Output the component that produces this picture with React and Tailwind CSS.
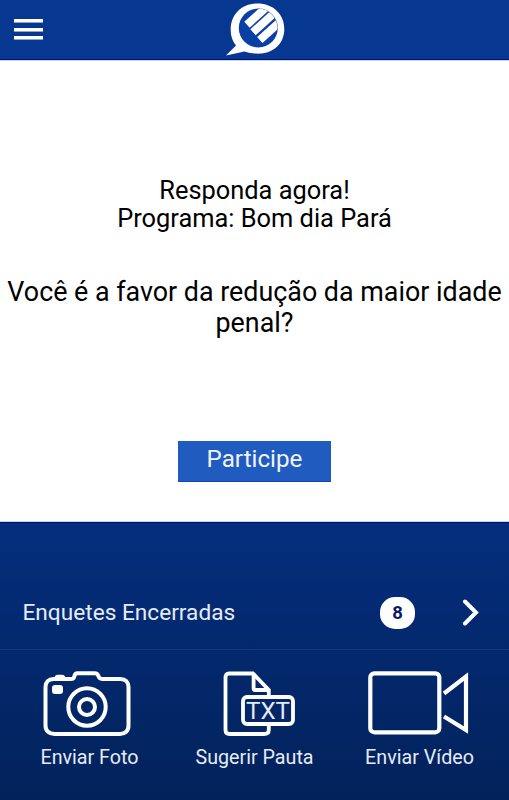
function Logo() {
  return (
    <svg className="ml-[3px] h-[60px] w-[64px] shrink-0" viewBox="0 0 64 60" fill="none">
      <path d="M2 55.400L12 45.500C8.300 41 6.700 36 6.700 30C6.700 14 18 3.500 33.500 3.500C49 3.500 60.300 14 60.300 29C60.300 44 49 53.700 34 53.700C29 53.700 24.500 53 20.500 51.600Z" fill="#fff" />
      <circle cx="34.300" cy="28" r="19.500" fill="#0a3fa6" />
      <clipPath id="disc"><circle cx="34.300" cy="28" r="19.200" /></clipPath>
      <g clipPath="url(#disc)" stroke="#fff" strokeWidth="8">
        <path d="M23 24.800L46 4" />
        <path d="M29 32.200L56 7.800" />
        <path d="M35.800 40L62 16.300" />
      </g>
    </svg>
  );
}

function CameraIcon() {
  return (
    <svg className="mr-[5px] h-[66px] w-[88px]" viewBox="0 0 88 66" fill="none" stroke="#fff" strokeWidth="4">
      <path d="M10.500 8H28C29.800 8 30.700 7.300 31.200 5.800L31.700 4.200C32.200 2.700 33 2.200 34.500 2.200H52C53.500 2.200 54.300 2.700 55 4.200L56 6.200C56.700 7.500 57.500 8 59 8H77.500C82.500 8 85.500 11 85.500 16V54.500C85.500 60 82 63 77 63H11.500C6 63 2.500 60 2.500 54.500V16C2.500 11 5.500 8 10.500 8Z" />
      <path d="M11 8.500C11.500 5 12.500 3.700 15 3.700H19C21 3.700 22.500 5 23 8.500Z" fill="#fff" stroke="none" />
      <rect x="9" y="14" width="11" height="9" rx="3" fill="#fff" stroke="none" />
      <circle cx="44" cy="36" r="18.700" />
      <circle cx="44" cy="36" r="8" />
    </svg>
  );
}

function TextFileIcon() {
  return (
    <svg className="ml-[8px] h-[66px] w-[72px]" viewBox="0 0 72 66" fill="none" stroke="#fff" strokeWidth="3.800">
      <path d="M45.800 26V19L30 2.500H6C3.500 2.500 2.500 3.800 2.500 6V59C2.500 61.700 4 63 6.500 63H41C44 63 45.800 61.500 45.800 59V54" />
      <path d="M30.600 2.500V17.500C30.600 18.600 31 19 32 19H45.500" />
      <rect x="20" y="26" width="50" height="27" rx="4" />
      <text x="45" y="48" textAnchor="middle" fill="#e6ebf5" stroke="none" fontSize="24.500" textLength="44" lengthAdjust="spacingAndGlyphs" className="font-[Roboto,sans-serif]">TXT</text>
    </svg>
  );
}

function VideoIcon() {
  return (
    <svg className="mr-[3px] h-[64px] w-[101px]" viewBox="0 0 101 64" fill="none" stroke="#fff" strokeWidth="4.200">
      <rect x="2.300" y="2.300" width="69" height="59" rx="4" />
      <path d="M76 22.500L98 5.500V59L76 45.500" />
    </svg>
  );
}

function Action({ icon, label }) {
  return (
    <button className="flex w-[165px] flex-col items-center">
      <span className="flex h-[66px] items-start justify-center">{icon}</span>
      <span className="mt-[9px] text-[19.700px] leading-6 whitespace-nowrap">{label}</span>
    </button>
  );
}

export default function App() {
  return (
    <div className="flex h-[800px] w-[509px] flex-col overflow-hidden bg-white font-[Roboto,sans-serif] text-black">
      <header className="grid h-[60px] shrink-0 grid-cols-3 border-b border-[#00107c] bg-[#063892]">
        <button className="flex flex-col gap-[5.500px] pt-[19px] pl-[14px]" aria-label="Menu">
          <span className="h-[3px] w-[29px] bg-white shadow-[0_1px_0_#8fa3d0]" />
          <span className="h-[3px] w-[29px] bg-white shadow-[0_1px_0_#8fa3d0]" />
          <span className="h-[3px] w-[29px] bg-white shadow-[0_1px_0_#8fa3d0]" />
        </button>
        <div className="flex justify-center"><Logo /></div>
      </header>

      <main className="flex h-[462px] shrink-0 flex-col items-center border-y border-[#cdd3ea] pt-[115px] text-center">
        <p className="text-[25.400px] leading-[28px] whitespace-nowrap">
          Responda agora!<br />Programa: Bom dia Pará
        </p>
        <h1 className="mt-[45px] text-[26.850px] leading-[31px] whitespace-nowrap">
          Você é a favor da redução da maior idade<br />penal?
        </h1>
        <button className="mt-[102px] h-[41px] w-[153px] border-b border-[#0b48b4] bg-[#205bbf] pb-[4px] text-[24.200px] leading-[36px] text-[#f0f4fc]">
          Participe
        </button>
      </main>

      <section className="flex grow flex-col border-t border-[#00106e] bg-linear-to-b from-[#042e7d] to-[#02225b] text-[#e6ebf5]">
        <div className="mt-[52px] flex h-[75px] items-center border-b border-[#153a78] pt-[2px] pr-[29px] pl-[22.500px]">
          <span className="grow text-[22.650px]">Enquetes Encerradas</span>
          <span className="flex h-8 w-[35px] items-center justify-center rounded-[15px] bg-white pt-px text-[18.500px] font-bold text-[#0a1a66]">8</span>
          <svg className="ml-[47px] h-[28px] w-[18px]" viewBox="0 0 18 28" fill="none" stroke="#fff" strokeWidth="4">
            <path d="M3 2.500L14 13.500L3 24.500" strokeLinecap="round" />
          </svg>
        </div>
        <nav className="flex px-[7px] pt-[21px]">
          <Action icon={<CameraIcon />} label="Enviar Foto" />
          <Action icon={<TextFileIcon />} label="Sugerir Pauta" />
          <Action icon={<VideoIcon />} label="Enviar Vídeo" />
        </nav>
      </section>
    </div>
  );
}
